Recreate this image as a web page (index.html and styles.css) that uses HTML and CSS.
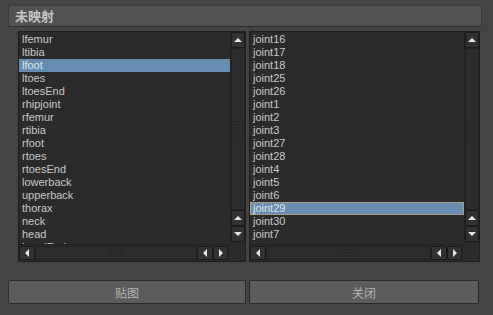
FILE: index.html
```html
<!DOCTYPE html>
<html>
	<head>
		<title>未映射</title>
		<link rel="stylesheet" href="styles.css">
	</head>
	<body>
		<div class="header">未映射</div>

		<div class="lists">
			<div class="list left">
				<div class="items">
					<div class="item">lfemur</div>
					<div class="item">ltibia</div>
					<div class="item selected">lfoot</div>
					<div class="item">ltoes</div>
					<div class="item">ltoesEnd</div>
					<div class="item">rhipjoint</div>
					<div class="item">rfemur</div>
					<div class="item">rtibia</div>
					<div class="item">rfoot</div>
					<div class="item">rtoes</div>
					<div class="item">rtoesEnd</div>
					<div class="item">lowerback</div>
					<div class="item">upperback</div>
					<div class="item">thorax</div>
					<div class="item">neck</div>
					<div class="item">head</div>
					<div class="item">headEnd</div>
				</div>
				<div class="vscroll">
					<div class="sbtn"><span class="up"></span></div>
					<div class="vtrack"><span class="grip vgrip"></span></div>
					<div class="sbtn"><span class="up"></span></div>
					<div class="sbtn"><span class="down"></span></div>
				</div>
				<div class="hscroll">
					<div class="sbtn"><span class="lt"></span></div>
					<div class="htrack"><span class="grip hgrip"></span></div>
					<div class="sbtn"><span class="lt"></span></div>
					<div class="sbtn"><span class="rt"></span></div>
				</div>
				<div class="corner"></div>
			</div>

			<div class="list right">
				<div class="items">
					<div class="item">joint16</div>
					<div class="item">joint17</div>
					<div class="item">joint18</div>
					<div class="item">joint25</div>
					<div class="item">joint26</div>
					<div class="item">joint1</div>
					<div class="item">joint2</div>
					<div class="item">joint3</div>
					<div class="item">joint27</div>
					<div class="item">joint28</div>
					<div class="item">joint4</div>
					<div class="item">joint5</div>
					<div class="item">joint6</div>
					<div class="item selected focused">joint29</div>
					<div class="item">joint30</div>
					<div class="item">joint7</div>
				</div>
				<div class="vscroll">
					<div class="sbtn"><span class="up"></span></div>
					<div class="vtrack"><span class="grip vgrip"></span></div>
					<div class="sbtn"><span class="up"></span></div>
					<div class="sbtn"><span class="down"></span></div>
				</div>
				<div class="hscroll">
					<div class="sbtn"><span class="lt"></span></div>
					<div class="htrack"><span class="grip hgrip"></span></div>
					<div class="sbtn"><span class="lt"></span></div>
					<div class="sbtn"><span class="rt"></span></div>
				</div>
				<div class="corner"></div>
			</div>
		</div>

		<div class="buttons">
			<button class="btn apply">贴图</button>
			<button class="btn close">关闭</button>
		</div>
	</body>
</html>
```

FILE: styles.css
```css
body {
	margin: 0;
	background-color: #444444;
	font-family: "Liberation Sans", "Noto Sans CJK SC", sans-serif;
	color: #c8c8c8;
}

.header {
	margin: 5px 0 0 8px;
	width: 466px;
	height: 20px;
	padding-left: 6px;
	background-color: #525252;
	border: 1px solid #3a3a3a;
	border-bottom-color: #2e2e2e;
	font-family: "Noto Sans CJK SC", sans-serif;
	font-size: 13px;
	font-weight: bold;
	line-height: 20px;
	color: #c4c4c4;
}

.lists {
	display: flex;
	gap: 3px;
	margin: 4px 0 0 18px;
	height: 231px;
}

.list {
	display: grid;
	grid-template-columns: 1fr 15px;
	grid-template-rows: 1fr 17px;
	background-color: #2b2b2b;
	border: 1px solid #1f1f1f;
	box-sizing: border-box;
	height: 100%;
}

.list.left {
	width: 228px;
}

.list.right {
	width: 231px;
}

/* the last row is cut by the scrollbar, as in the source window */
.items {
	overflow: hidden;
	padding-top: 1px;
	font-size: 11px;
}

.item {
	height: 13px;
	line-height: 13px;
	padding-left: 3px;
	white-space: nowrap;
}

.item.selected {
	background-color: #678db2;
	color: #dde4ec;
}

.item.focused {
	outline: 1px dotted #e3b25a;
	outline-offset: -1px;
}

.vscroll {
	display: flex;
	flex-direction: column;
	background-color: #2a2a2a;
	border-left: 1px solid #222222;
}

.hscroll {
	display: flex;
	align-items: stretch;
	padding: 1px 0 1px 0;
	background-color: #2a2a2a;
	border-top: 1px solid #222222;
}

.corner {
	background-color: #2b2b2b;
}

.sbtn {
	display: flex;
	align-items: center;
	justify-content: center;
	box-sizing: border-box;
	background-color: #323232;
	border: 1px solid #1a1a1a;
	border-radius: 2px;
}

.vscroll .sbtn {
	height: 16px;
}

.vscroll .sbtn:last-child {
	margin-bottom: 2px;
}

.hscroll .sbtn {
	width: 16px;
}

.hscroll .sbtn:last-child {
	margin-right: 2px;
	width: 15px;
}

.vtrack,
.htrack {
	flex: 1;
	display: flex;
	align-items: center;
	justify-content: center;
	border: 1px solid #222222;
	background-color: #2c2c2c;
}

.grip {
	display: block;
	background-image: radial-gradient(#202020 30%, transparent 40%);
	background-size: 3px 3px;
}

.vgrip {
	width: 12px;
	height: 18px;
}

.hgrip {
	width: 18px;
	height: 10px;
}

.up,
.down,
.lt,
.rt {
	width: 0;
	height: 0;
	border: 4px solid transparent;
}

.up {
	border-top-width: 0;
	border-bottom: 4px solid #e6e6e6;
}

.down {
	border-bottom-width: 0;
	border-top: 4px solid #e6e6e6;
}

.lt {
	border-left-width: 0;
	border-right: 4px solid #e6e6e6;
}

.rt {
	border-right-width: 0;
	border-left: 4px solid #e6e6e6;
}

.buttons {
	display: flex;
	gap: 3px;
	margin: 18px 0 0 8px;
}

.btn {
	height: 24px;
	background-color: #5c5c5c;
	border: 1px solid #2b2b2b;
	border-radius: 2px;
	color: #b4b4b4;
	font-family: "Noto Sans CJK SC", sans-serif;
	font-size: 12px;
	padding: 0;
}

.btn.apply {
	width: 238px;
}

.btn.close {
	width: 230px;
}
```
